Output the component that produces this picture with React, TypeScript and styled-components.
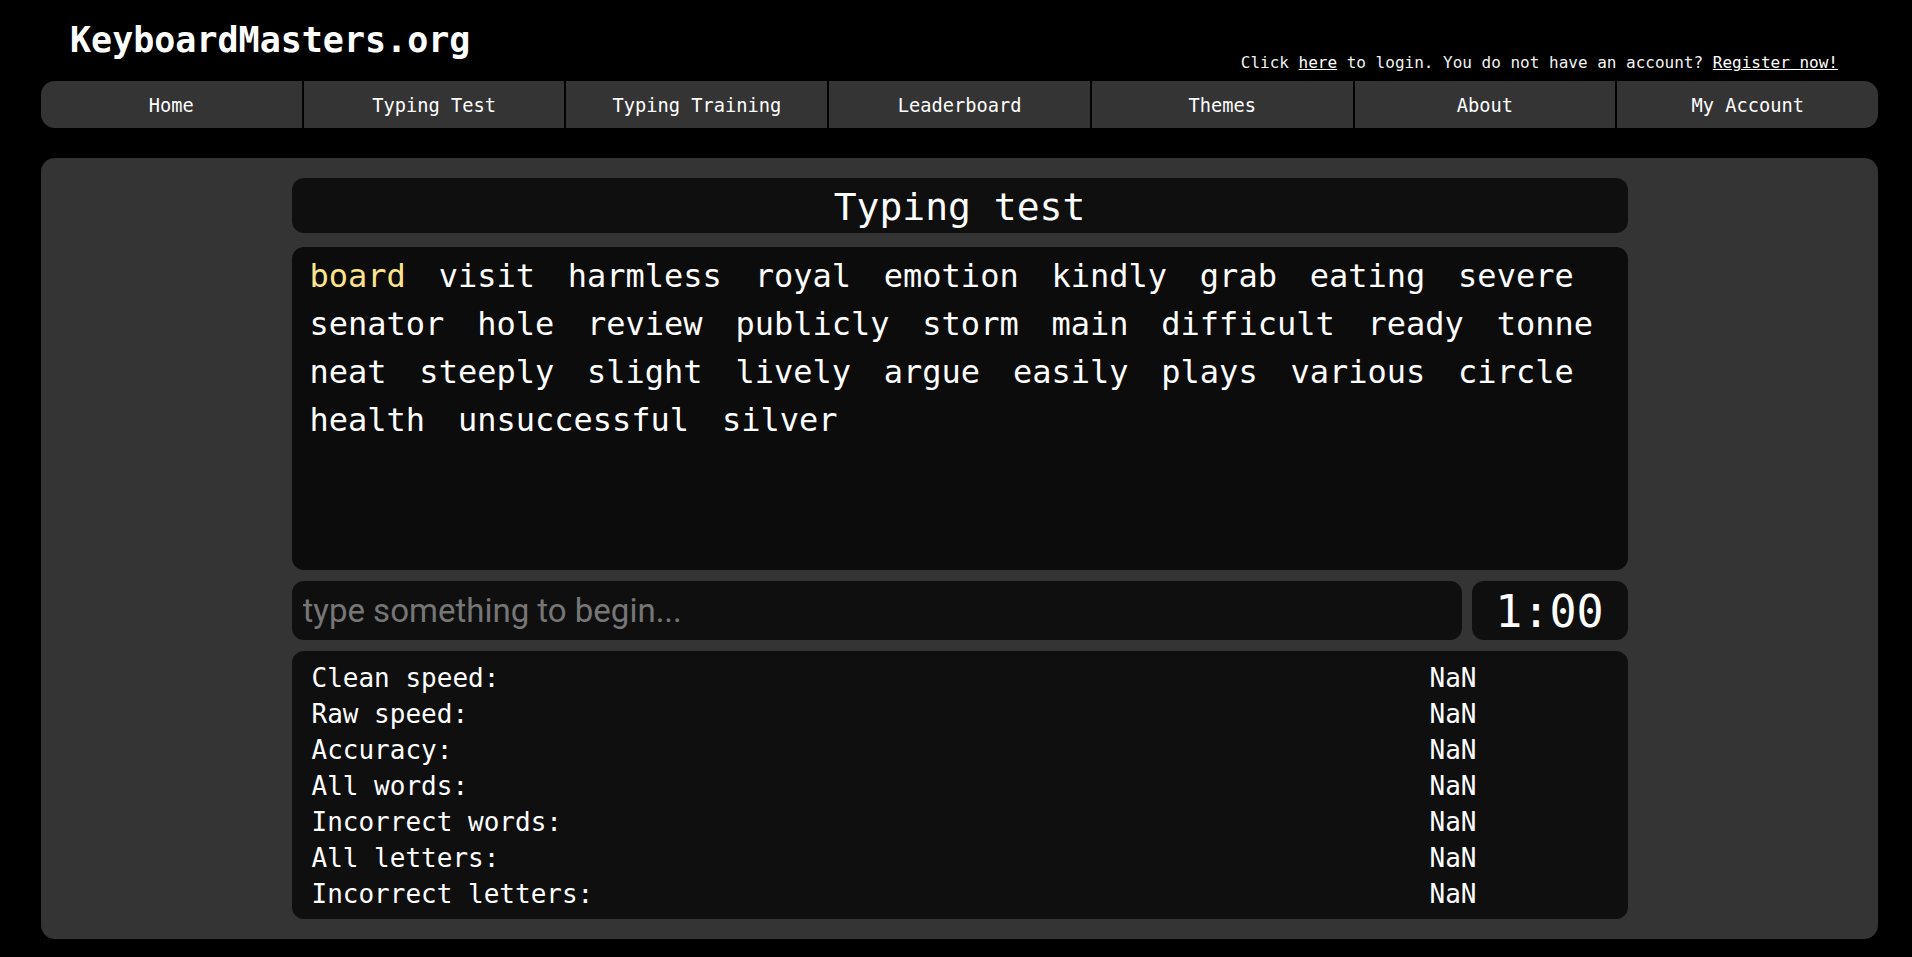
import { Fragment } from "react";
import styled, { createGlobalStyle } from "styled-components";

const GlobalStyle = createGlobalStyle`
  html, body {
    margin: 0;
    padding: 0;
    background: #000;
    color: #fff;
    font-family: "DejaVu Sans Mono", "Liberation Mono", monospace;
  }
`;

const Page = styled.div`
  padding: 0 34px 18px 41px;
  box-sizing: border-box;
  min-height: 957px;
`;

const TopBar = styled.header`
  display: flex;
  justify-content: space-between;
  align-items: flex-end;
  height: 81px;
  padding: 0 40px 0 29px;
  box-sizing: border-box;
`;

const SiteTitle = styled.h1`
  align-self: flex-start;
  margin: 20px 0 0;
  font-size: 35px;
  line-height: 40px;
  font-weight: 700;
`;

const LoginNote = styled.div`
  font-size: 16px;
  line-height: 19px;
  margin-bottom: 9px;
  color: #f2f2f2;

  a {
    color: #fff;
    text-decoration: underline;
  }
`;

const Nav = styled.nav`
  display: flex;
  height: 47px;
  background: #343434;
  border-radius: 14px;
  overflow: hidden;
`;

const NavItem = styled.a`
  flex: 1;
  display: flex;
  align-items: center;
  justify-content: center;
  padding-top: 2px;
  font-size: 18.7px;
  color: #fff;
  text-decoration: none;
  & + & {
    border-left: 2px solid #000;
  }
`;

const Panel = styled.main`
  margin-top: 30px;
  background: #343434;
  border-radius: 14px;
  padding: 20px 0;
  display: flex;
  justify-content: center;
`;

const Column = styled.section`
  width: 1336px;
  display: flex;
  flex-direction: column;
`;

const Card = styled.div`
  background: #0f0f0f;
  border-radius: 12px;
`;

const Heading = styled(Card)`
  height: 55px;
  box-sizing: border-box;
  padding-top: 3px;
  line-height: 52px;
  text-align: center;
  font-size: 38px;
`;

const WordsBox = styled(Card)`
  margin-top: 14px;
  height: 323px;
  box-sizing: border-box;
  padding: 5px 18px 4px;
  background: #0c0c0c;
  display: flex;
  flex-wrap: wrap;
  align-content: flex-start;
  column-gap: 32.8px;
  font-size: 32px;
  line-height: 48px;
`;

const Word = styled.span<{ $current?: boolean }>`
  color: ${(p) => (p.$current ? "#fde48b" : "#fff")};
`;

const InputRow = styled.div`
  margin-top: 11px;
  display: flex;
  gap: 10px;
  height: 59px;
`;

const TypeInput = styled.input`
  flex: 1;
  min-width: 0;
  border: none;
  outline: none;
  border-radius: 12px;
  background: #0f0f0f;
  color: #fff;
  padding: 0 11px;
  font-family: Roboto, "Liberation Sans", sans-serif;
  font-size: 33px;

  &::placeholder {
    color: #767676;
  }
`;

const Timer = styled(Card)`
  width: 156px;
  display: flex;
  align-items: center;
  justify-content: center;
  padding-top: 2px;
  box-sizing: border-box;
  font-size: 45px;
`;

const Stats = styled(Card)`
  margin-top: 11px;
  padding: 9px 20px 7px;
  display: grid;
  grid-template-columns: 1fr 178px;
  font-size: 26px;
  line-height: 36px;
`;

const words = [
  "board", "visit", "harmless", "royal", "emotion", "kindly", "grab", "eating", "severe",
  "senator", "hole", "review", "publicly", "storm", "main", "difficult", "ready", "tonne",
  "neat", "steeply", "slight", "lively", "argue", "easily", "plays", "various", "circle",
  "health", "unsuccessful", "silver",
];

const navLinks = ["Home", "Typing Test", "Typing Training", "Leaderboard", "Themes", "About", "My Account"];

const statLabels = [
  "Clean speed:",
  "Raw speed:",
  "Accuracy:",
  "All words:",
  "Incorrect words:",
  "All letters:",
  "Incorrect letters:",
];

export default function App() {
  return (
    <>
      <GlobalStyle />
      <Page>
        <TopBar>
          <SiteTitle>KeyboardMasters.org</SiteTitle>
          <LoginNote>
            Click <a href="#">here</a> to login. You do not have an account? <a href="#">Register now!</a>
          </LoginNote>
        </TopBar>
        <Nav>
          {navLinks.map((l) => (
            <NavItem key={l} href="#">
              {l}
            </NavItem>
          ))}
        </Nav>
        <Panel>
          <Column>
            <Heading>Typing test</Heading>
            <WordsBox>
              {words.map((w, i) => (
                <Word key={i} $current={i === 0}>
                  {w}
                </Word>
              ))}
            </WordsBox>
            <InputRow>
              <TypeInput placeholder="type something to begin..." />
              <Timer>1:00</Timer>
            </InputRow>
            <Stats>
              {statLabels.map((s) => (
                <Fragment key={s}>
                  <span>{s}</span>
                  <span>NaN</span>
                </Fragment>
              ))}
            </Stats>
          </Column>
        </Panel>
      </Page>
    </>
  );
}
